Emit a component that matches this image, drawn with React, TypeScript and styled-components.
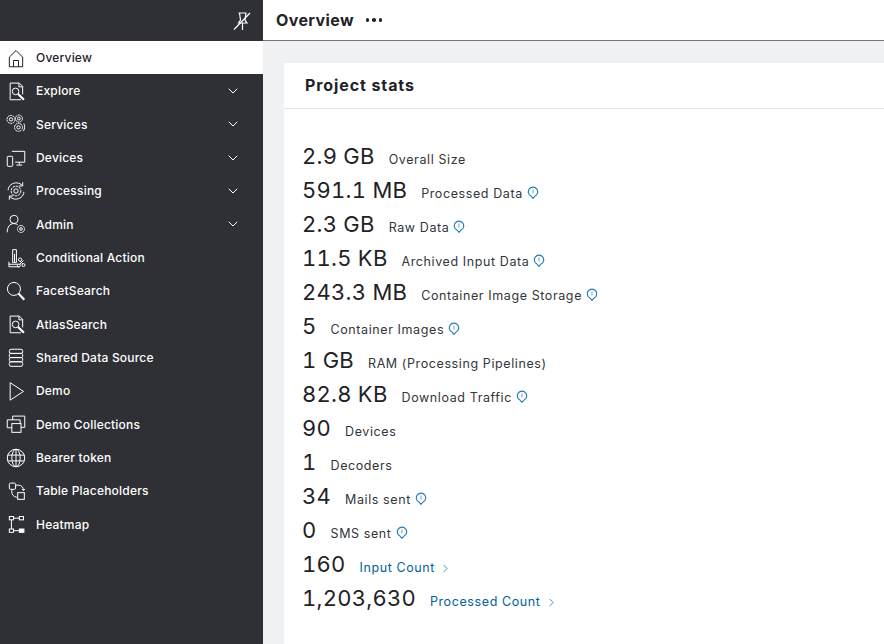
import React from "react";
import styled, { createGlobalStyle } from "styled-components";
import { ChevronDown, ChevronRight } from "lucide-react";

const GlobalStyle = createGlobalStyle`
    html, body {
        margin: 0;
        padding: 0;
        height: 100%;
        overflow: hidden;
        background: #eff1f2;
        font-family: Inter, "Noto Sans", "Liberation Sans", sans-serif;
    }
`;

const icons: Record<string, React.ReactNode> = {
    home: <><path d="M4 22.500V11l8-8 8 8v11.500z" /><path d="M9 22.500V15h6v7.500" /></>,
    explore: <><path d="M5 2.500h11l4 4V16M5 2.500v20h13" /><path d="M15.500 2.500v4.500h4.500" /><circle cx="11.500" cy="12.500" r="4" /><path d="m14.500 15.500 7 7" strokeWidth="2.600" /></>,
    services: <><circle cx="6" cy="6.500" r="4.800" strokeDasharray="2.400 .6" /><circle cx="6" cy="6.500" r="2" /><circle cx="15.500" cy="5.500" r="4.200" strokeDasharray="2.400 .6" /><circle cx="15.500" cy="5.500" r="1.700" /><circle cx="15" cy="16" r="4.800" strokeDasharray="2.400 .6" /><circle cx="15" cy="16" r="2" /><path d="M21.500 11.500c1.400 3 1.200 6-.6 9" /></>,
    devices: <><path d="M7 4h15.500v13H11M16 17v3M12.500 20.500h7" /><rect x="1.500" y="10" width="6.500" height="12" rx="1" /></>,
    processing: <><circle cx="12" cy="12" r="5.800" strokeDasharray="3 .8" /><circle cx="12" cy="12" r="2.600" /><path d="M2.500 11C3 5 8 2 13 2.300c3 .2 5 1.500 6.500 3M21.500 13c-.5 6-5.500 9-10.500 8.700-3-.2-5-1.500-6.500-3" /><path d="M20 1.500V6h-4.500M4 22.500V18h4.500" /></>,
    admin: <><circle cx="9.500" cy="6.500" r="4.800" /><path d="M1.500 22c0-6.500 3-10.500 8-10.500 2 0 3.500.5 4.500 1.500" /><circle cx="18" cy="18" r="4.200" strokeDasharray="2.200 .6" /><circle cx="18" cy="18" r="1.600" /></>,
    action: <><path d="M8 2h4.500v15.500H8zM10.200 7v10" /><path d="M3.500 16.500v6h12M3.500 19.500h11" /><circle cx="17" cy="14" r="2" /><circle cx="15.500" cy="21" r="1.800" /><circle cx="21" cy="20.500" r="1.800" /><path d="m17 16 3.200 3M21 15l-5 5" /></>,
    facet: <><circle cx="9.500" cy="9.500" r="7.800" /><path d="m15 15 7 7.500" strokeWidth="2.600" /></>,
    atlas: <><path d="M5 2.500h11l4 4V16M5 2.500v20h13" /><path d="M15.500 2.500v4.500h4.500" /><circle cx="11.500" cy="12.500" r="4" /><path d="m14.500 15.500 7 7" strokeWidth="2.600" /></>,
    data: <><rect x="4" y="1.500" width="16" height="5" rx="2" /><rect x="4" y="6.500" width="16" height="5" rx="1.500" /><rect x="4" y="11.500" width="16" height="5" rx="1.500" /><rect x="4" y="16.500" width="16" height="5.500" rx="2" /></>,
    play: <path d="M5 2v21l16-10.500z" />,
    collections: <><path d="M8 7V2.500h14.500V16H18" /><path d="M7 16.500H1.500V7H17v5" /><rect x="7" y="11.500" width="11" height="10.500" /></>,
    globe: <><circle cx="12" cy="12" r="10.500" /><ellipse cx="12" cy="12" rx="5" ry="10.500" /><path d="M2 8.500h20M2 15.500h20M12 1.500v21" /></>,
    placeholders: <><rect x="4" y="2.500" width="7.500" height="7.500" rx="1.500" /><rect x="14" y="14" width="8" height="8" /><path d="M11.500 5H15c3.500 0 6 2.500 6 6.500M19 9.500l2 2 2-2M7 10v3c0 3.500 2 6 6 6.500" /></>,
    heatmap: <><rect x="4" y="3" width="5" height="4" /><rect x="16" y="3" width="5" height="4" /><rect x="4" y="18" width="5" height="4" /><rect x="16" y="18" width="5.500" height="4" fill="currentColor" /><path d="M9 5h7M9 20h7M6.500 7v11" /></>,
};

const navItems = [
    { label: "Overview", icon: "home", active: true },
    { label: "Explore", icon: "explore", expandable: true },
    { label: "Services", icon: "services", expandable: true },
    { label: "Devices", icon: "devices", expandable: true },
    { label: "Processing", icon: "processing", expandable: true },
    { label: "Admin", icon: "admin", expandable: true },
    { label: "Conditional Action", icon: "action" },
    { label: "FacetSearch", icon: "facet" },
    { label: "AtlasSearch", icon: "atlas" },
    { label: "Shared Data Source", icon: "data" },
    { label: "Demo", icon: "play" },
    { label: "Demo Collections", icon: "collections" },
    { label: "Bearer token", icon: "globe" },
    { label: "Table Placeholders", icon: "placeholders" },
    { label: "Heatmap", icon: "heatmap" },
];

type Stat = { value: string; label: string; info?: boolean; link?: boolean };

const stats: Stat[] = [
    { value: "2.9 GB", label: "Overall Size" },
    { value: "591.1 MB", label: "Processed Data", info: true },
    { value: "2.3 GB", label: "Raw Data", info: true },
    { value: "11.5 KB", label: "Archived Input Data", info: true },
    { value: "243.3 MB", label: "Container Image Storage", info: true },
    { value: "5", label: "Container Images", info: true },
    { value: "1 GB", label: "RAM (Processing Pipelines)" },
    { value: "82.8 KB", label: "Download Traffic", info: true },
    { value: "90", label: "Devices" },
    { value: "1", label: "Decoders" },
    { value: "34", label: "Mails sent", info: true },
    { value: "0", label: "SMS sent", info: true },
    { value: "160", label: "Input Count", link: true },
    { value: "1,203,630", label: "Processed Count", link: true },
];

function InfoPin() {
    return (
        <PinIcon viewBox="0 0 12 13" fill="none" stroke="currentColor" strokeWidth="1.100">
            <path d="M6 12.300 4 10.100A4.700 4.700 0 1 1 8 10.100z" />
            <path d="M6 3.500v4" stroke="#9a9ea3" />
        </PinIcon>
    );
}

export default function App() {
    return (
        <>
            <GlobalStyle />
            <Page>
                <Sidebar>
                    <PinBar>
                        <PinButton viewBox="0 0 18 18" fill="none" stroke="currentColor" strokeWidth="1.200">
                            <path d="M5.500 1h8M6.500 1l1 7-2 3h8.500l-2-3 1-7M9.500 11v7" />
                            <path d="M1 17.500 17 1" />
                        </PinButton>
                    </PinBar>
                    <nav>
                        {navItems.map(item => (
                            <NavRow key={item.label} $active={item.active}>
                                <NavIcon viewBox="0 0 24 24" fill="none" stroke="currentColor" strokeWidth="1.200">
                                    {icons[item.icon]}
                                </NavIcon>
                                <NavLabel>{item.label}</NavLabel>
                                {item.expandable && <Chevron size={16} strokeWidth={1.500} />}
                            </NavRow>
                        ))}
                    </nav>
                </Sidebar>
                <Main>
                    <TopBar>
                        <PageTitle>Overview</PageTitle>
                        <Dots>
                            <i /><i /><i />
                        </Dots>
                    </TopBar>
                    <Content>
                        <Card>
                            <CardHeader>Project stats</CardHeader>
                            <StatList>
                                {stats.map(stat => (
                                    <StatRow key={stat.label}>
                                        <StatValue>{stat.value}</StatValue>
                                        <StatLabel $link={stat.link}>{stat.label}</StatLabel>
                                        {stat.info && <InfoPin />}
                                        {stat.link && <LinkArrow size={13} strokeWidth={1.300} />}
                                    </StatRow>
                                ))}
                            </StatList>
                        </Card>
                    </Content>
                </Main>
            </Page>
        </>
    );
}

const Page = styled.div`
    display: flex;
    width: 884px;
    height: 644px;
    overflow: hidden;
`;

const Sidebar = styled.aside`
    width: 263px;
    flex: none;
    background: #2e3035;
    color: #fff;
`;

const PinBar = styled.div`
    height: 41px;
    display: flex;
    align-items: center;
    justify-content: flex-end;
    padding-right: 12px;
    box-sizing: border-box;
`;

const PinButton = styled.svg`
    width: 18px;
    height: 18px;
`;

const NavRow = styled.div<{ $active?: boolean }>`
    height: 33.33px;
    display: flex;
    align-items: center;
    padding: 0 22px 0 6px;
    box-sizing: border-box;
    background: ${p => (p.$active ? "#fff" : "transparent")};
    color: ${p => (p.$active ? "#1f2226" : "#fff")};
`;

const NavIcon = styled.svg`
    width: 20px;
    height: 20px;
    flex: none;
    margin-right: 10px;
`;

const NavLabel = styled.span`
    flex: 1;
    font-size: 12px;
    font-weight: 500;
    letter-spacing: 0.2px;
`;

const Chevron = styled(ChevronDown)`
    flex: none;
`;

const Main = styled.main`
    flex: 1;
    min-width: 0;
    display: flex;
    flex-direction: column;
`;

const TopBar = styled.header`
    height: 41px;
    flex: none;
    display: flex;
    align-items: center;
    gap: 12px;
    padding-left: 13px;
    box-sizing: border-box;
    background: #fff;
    border-bottom: 1px solid #71767c;
`;

const PageTitle = styled.h1`
    margin: 0;
    font-size: 16px;
    font-weight: 700;
    letter-spacing: 0.4px;
    color: #1f2226;
`;

const Dots = styled.span`
    display: flex;
    gap: 3px;

    & > i {
        width: 3.500px;
        height: 3.500px;
        border-radius: 50%;
        background: #1f2226;
    }
`;

const Content = styled.div`
    flex: 1;
    padding: 22px 0 0 21px;
`;

const Card = styled.section`
    height: 100%;
    background: #fff;
`;

const CardHeader = styled.h2`
    margin: 0;
    height: 46px;
    padding: 12px 0 0 21px;
    box-sizing: border-box;
    font-size: 16px;
    font-weight: 700;
    letter-spacing: 0.9px;
    color: #1f2226;
    border-bottom: 1px solid #e0e2e5;
`;

const StatList = styled.div`
    padding: 34px 0 0 18px;
`;

const StatRow = styled.div`
    height: 34px;
    display: flex;
    align-items: baseline;
`;

const StatValue = styled.span`
    font-size: 22px;
    font-variant-numeric: tabular-nums;
    letter-spacing: 0.25px;
    color: #1f2226;
    margin-right: 14px;
`;

const StatLabel = styled.span<{ $link?: boolean }>`
    font-size: 12.5px;
    letter-spacing: 0.6px;
    color: ${p => (p.$link ? "#00629a" : "#31363b")};
`;

const PinIcon = styled.svg`
    width: 12px;
    height: 13px;
    margin-left: 4px;
    color: #1c7fb5;
    align-self: center;
    margin-top: -4px;
`;

const LinkArrow = styled(ChevronRight)`
    margin-left: 4px;
    color: #00629a;
    align-self: center;
`;
